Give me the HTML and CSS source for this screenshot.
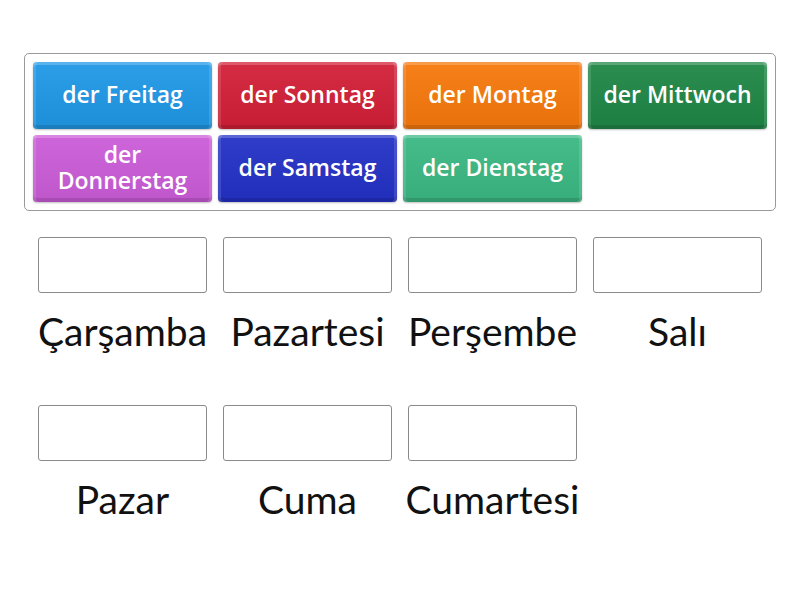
FILE: index.html
```html
<!DOCTYPE html>
<html lang="de">
<head>
<meta charset="utf-8">
<title>Wochentage</title>
<link rel="stylesheet" href="styles.css">
</head>
<body>
<div class="page">
  <div class="bank">
    <div class="tile blue">der Freitag</div>
    <div class="tile red">der Sonntag</div>
    <div class="tile orange">der Montag</div>
    <div class="tile dgreen">der Mittwoch</div>
    <div class="tile purple">der Donnerstag</div>
    <div class="tile navy">der Samstag</div>
    <div class="tile green">der Dienstag</div>
  </div>
  <div class="targets">
    <div class="slot"><div class="box"></div><div class="label">Çarşamba</div></div>
    <div class="slot"><div class="box"></div><div class="label">Pazartesi</div></div>
    <div class="slot"><div class="box"></div><div class="label">Perşembe</div></div>
    <div class="slot"><div class="box"></div><div class="label">Salı</div></div>
    <div class="slot"><div class="box"></div><div class="label">Pazar</div></div>
    <div class="slot"><div class="box"></div><div class="label">Cuma</div></div>
    <div class="slot"><div class="box"></div><div class="label">Cumartesi</div></div>
  </div>
</div>
</body>
</html>
```

FILE: styles.css
```css
html, body {
  margin: 0;
  padding: 0;
  background: #ffffff;
}
body {
  font-family: "Lato", "Open Sans", sans-serif;
  color: #111;
}
.page {
  width: 800px;
  height: 600px;
  padding-top: 53px;
  box-sizing: border-box;
}
.bank {
  margin: 0 24px;
  width: 752px;
  box-sizing: border-box;
  border: 1px solid #9a9a9a;
  border-radius: 5px;
  padding: 8px;
  display: grid;
  grid-template-columns: repeat(4, 179px);
  grid-auto-rows: 67px;
  column-gap: 6px;
  row-gap: 6px;
}
.tile {
  display: flex;
  align-items: center;
  justify-content: center;
  text-align: center;
  color: #fff;
  font-family: "Open Sans", "Lato", sans-serif;
  font-weight: 600;
  font-size: 23px;
  line-height: 26px;
  border-radius: 4px;
  padding: 0 6px 3px;
  box-sizing: border-box;
  background-image: linear-gradient(to bottom, rgba(255,255,255,0.06), rgba(0,0,0,0.06));
  box-shadow:
    inset 0 3px 0 rgba(255,255,255,0.22),
    inset 3px 0 0 rgba(255,255,255,0.12),
    inset -3px 0 0 rgba(255,255,255,0.12),
    inset 0 -4px 0 rgba(0,0,0,0.12),
    0 1px 2px rgba(0,0,0,0.25);
}
.blue { background-color: #1f98e6; }
.red { background-color: #d21f37; }
.orange { background-color: #f6780c; }
.dgreen { background-color: #1f8646; }
.purple { background-color: #cb5cd8; }
.navy { background-color: #2231c6; }
.green { background-color: #3bb884; }

.targets {
  margin: 26px 30px 0;
  display: grid;
  grid-template-columns: repeat(4, 185px);
  grid-auto-rows: 168px;
}
.slot {
  display: flex;
  flex-direction: column;
  align-items: center;
}
.box {
  width: 169px;
  height: 56px;
  box-sizing: border-box;
  border: 1px solid #8a8a8a;
  border-radius: 3px;
  background: #fff;
}
.label {
  margin-top: 16px;
  font-size: 39px;
  font-weight: 400;
  line-height: 44px;
  color: #111;
  white-space: nowrap;
}
```
